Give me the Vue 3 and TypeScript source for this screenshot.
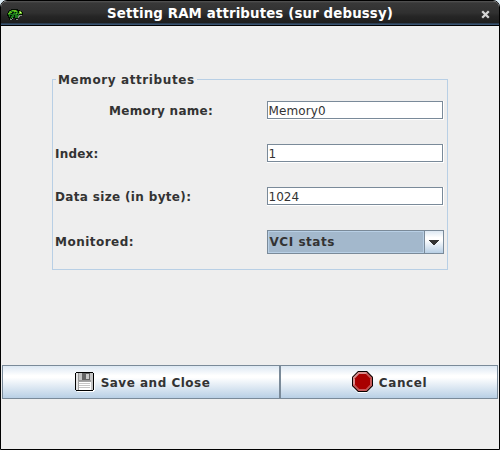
<script setup lang="ts">
import { ref } from 'vue'

interface Field {
  id: string
  label: string
  value: string
}

const fields = ref<Field[]>([
  { id: 'name', label: 'Memory name:', value: 'Memory0' },
  { id: 'index', label: 'Index:', value: '1' },
  { id: 'size', label: 'Data size (in byte):', value: '1024' },
])
</script>

<template>
  <div class="window">
    <header class="titlebar">
      <svg class="turtle" width="16" height="12" viewBox="0 0 16 12" shape-rendering="crispEdges">
        <path fill="#050d05" d="M4 0h7v1h2v1h2v1h1v3h-1v1h-3v2h-1v2H8V9H6v2H2V9H1V7H0V4h1V2h1V1h2z" />
        <path fill="#1d7a1d" d="M4 1h6v1h1v2h1v3h-1v2H8V8H6v1H4v1H3V8H2V6H1V4h1V2h2z" />
        <path fill="#62bd1c" d="M5 1h4v1h1v1H7V2H5zM3 2h1v1h1v1H3v1H1V4h1V3h1zM12 2h2v1h1v2h-3zM9 4h1v1H9z" />
        <path fill="#061a06" d="M5 3h2v1H6v1H4V4h1zM3 6h2v1H4v2H3zM8 3h1v1H8zM7 6h1v2H7zM10 5h1v1h-1z" />
        <path fill="#858985" d="M5 9h1v1H5zM3 10h2v1H3zM12 6h3v1h-2v1h-1v1h-1V7h1zM9 10h2v1H9z" />
        <path fill="#e9f8a4" d="M13 3h1v1h-1z" />
      </svg>
      <h1 class="title">Setting RAM attributes (sur debussy)</h1>
      <svg class="close" width="9" height="9" viewBox="0 0 9 9">
        <path d="M1.200 1.200L7.800 7.800M7.800 1.200L1.200 7.800" stroke="#d4d4d4" stroke-width="2.300" />
      </svg>
    </header>
    <main class="content">
      <fieldset class="group">
        <legend class="legend"><span class="t-legend">Memory attributes</span></legend>
        <div v-for="f in fields" :key="f.id" class="row">
          <label class="label" :class="'t-' + f.id" :for="f.id">{{ f.label }}</label>
          <div class="field"><input :id="f.id" v-model="f.value" class="input" :class="'i-' + f.id" type="text" /></div>
        </div>
        <div class="row row-combo">
          <span class="label t-monitored">Monitored:</span>
          <div class="combo">
            <div class="selected"><span class="t-vci">VCI stats</span></div>
            <div class="arrow">
              <svg width="10" height="5" viewBox="0 0 10 5" shape-rendering="crispEdges">
                <path fill="#333" d="M0 0h10v1H9v1H8v1H7v1H6v1H4V4H3V3H2V2H1V1H0z" />
              </svg>
            </div>
          </div>
        </div>
      </fieldset>
      <div class="actions">
        <button class="btn save" type="button">
          <svg width="20" height="20" viewBox="0 0 20 20" shape-rendering="crispEdges">
            <path fill="#fff" d="M2 2h18v17h-1v1H2z" />
            <path fill="#000" d="M1 0h17v1h1v17h-1v1H1v-1H0V1h1z" />
            <path fill="#c5c5c5" d="M1 1h17v17H1z" />
            <path fill="#e5e5e5" d="M1 1h2v17H1z" />
            <path fill="#999" d="M3 1h1v7h12v1H3z" />
            <path fill="#a3a3a3" d="M3 9h13v9H3z" />
            <path fill="#fff" d="M4 10h12v8H4z" />
            <path fill="#c6c6c6" d="M4 11h11v1H4zM4 13h11v1H4zM4 15h11v1H4z" />
            <path fill="#646464" d="M7 1h8v7H7z" />
            <path fill="#c9c9c9" d="M11 2h3v5h-3z" />
          </svg>
          <span class="t-save">Save and Close</span>
        </button>
        <button class="btn cancel" type="button">
          <svg width="21" height="22" viewBox="0 0 21 22">
            <path fill="#fff" d="M7 2h9l5 5v8l-6 7H6l-5-5z" />
            <path fill="#080000" d="M6 0h9l6 6v9l-6 6H6l-6-6V6z" />
            <path fill="#c65858" d="M6.500 1h8l5.500 5.500v8L14.500 20h-8L1 14.500V6.500z" />
            <path fill="#d89090" d="M6.500 1h8v2h-7L3 7.500v6H1v-7z" />
            <path fill="#a90000" d="M7.200 3h6.600L18 7.200v6.600L13.800 18H7.200L3 13.800V7.200z" />
          </svg>
          <span class="t-cancel">Cancel</span>
        </button>
      </div>
    </main>
  </div>
</template>

<style>
body {
  margin: 0;
  background: #dcecf5;
}
</style>

<style scoped>
.window {
  box-sizing: border-box;
  width: 500px;
  height: 450px;
  display: flex;
  flex-direction: column;
  border: 1px solid #000;
  border-radius: 7px 7px 0 0;
  overflow: hidden;
  background: #eee;
  color: #333;
  font: bold 12px/14px "DejaVu Sans", sans-serif;
  white-space: nowrap;
}
.titlebar {
  box-sizing: border-box;
  height: 25px;
  flex: none;
  display: flex;
  align-items: center;
  padding: 0 9px 0 6px;
  background: linear-gradient(#555 0, #383838 2px, #303030 12px, #262626 15px, #1e1e1e 22px, #253444 22px, #405e80 24px, #000 24px);
}
.turtle {
  margin-top: 2px;
}
.title {
  flex: 1;
  margin: 0;
  padding-right: 4px;
  text-align: center;
  color: #fff;
  font-size: 13.33px;
  line-height: 16px;
  letter-spacing: 0.14px;
}
.close {
  margin-top: 1px;
}
.content {
  flex: 1;
  display: flex;
  flex-direction: column;
}
.group {
  box-sizing: border-box;
  width: 396px;
  height: 198px;
  margin: 46px 0 0 51px;
  padding: 14px 3px 0 2px;
  border: 1px solid #b8cfe5;
}
.legend {
  box-sizing: border-box;
  width: 141px;
  height: 15px;
  margin-left: 1px;
  padding: 1px 0 0 2px;
}
.row {
  display: flex;
  align-items: center;
  justify-content: space-between;
  height: 19px;
  margin-bottom: 24px;
}
.row-combo {
  height: 24px;
}
.label {
  width: 158px;
}
.t-legend {
  letter-spacing: 0.6px;
}
.t-name {
  text-align: right;
  letter-spacing: 0.26px;
}
.t-index {
  letter-spacing: 0.2px;
}
.t-size {
  letter-spacing: 0.34px;
}
.t-monitored {
  letter-spacing: 0.48px;
}
.t-vci {
  letter-spacing: 0.54px;
}
.t-save {
  letter-spacing: 0.5px;
}
.t-cancel {
  letter-spacing: 0.6px;
}
.field {
  box-sizing: border-box;
  width: 177px;
  height: 19px;
  padding: 0 1px 1px 0;
  background: #fff;
}
.input {
  box-sizing: border-box;
  display: block;
  width: 176px;
  height: 18px;
  padding: 1px 0.5px 0;
  border: 1px solid #7a8a99;
  border-radius: 0;
  outline: none;
  background: #fff;
  color: #333;
  font: 12px/14px "DejaVu Sans", sans-serif;
}
.i-name {
  letter-spacing: 0.1px;
}
.combo {
  box-sizing: border-box;
  display: flex;
  width: 177px;
  height: 24px;
  border: 1px solid #7a8a99;
}
.selected {
  box-sizing: border-box;
  flex: 1;
  padding: 3px 0.5px;
  border: 1px solid #b8cfe5;
  background: #a3b8cc;
}
.arrow {
  display: flex;
  align-items: center;
  justify-content: center;
  width: 18px;
  border-left: 1px solid #7a8a99;
  background: linear-gradient(#dde8f3 0, #fff 30%, #fff 40%, #b8cfe5 100%);
}
.actions {
  display: flex;
  margin: 95px 1px 0;
}
.btn {
  box-sizing: border-box;
  display: flex;
  align-items: center;
  justify-content: center;
  gap: 6px;
  height: 34px;
  padding: 0 0 0 1px;
  border: 1px solid #7a8a99;
  border-radius: 0;
  background: linear-gradient(#dde8f3 0, #fff 30%, #fff 36%, #b8cfe5 100%);
  color: #333;
  font: inherit;
}
.btn span {
  padding-top: 1px;
}
.save {
  width: 278px;
  padding-left: 3px;
}
.cancel {
  width: 218px;
}
</style>
